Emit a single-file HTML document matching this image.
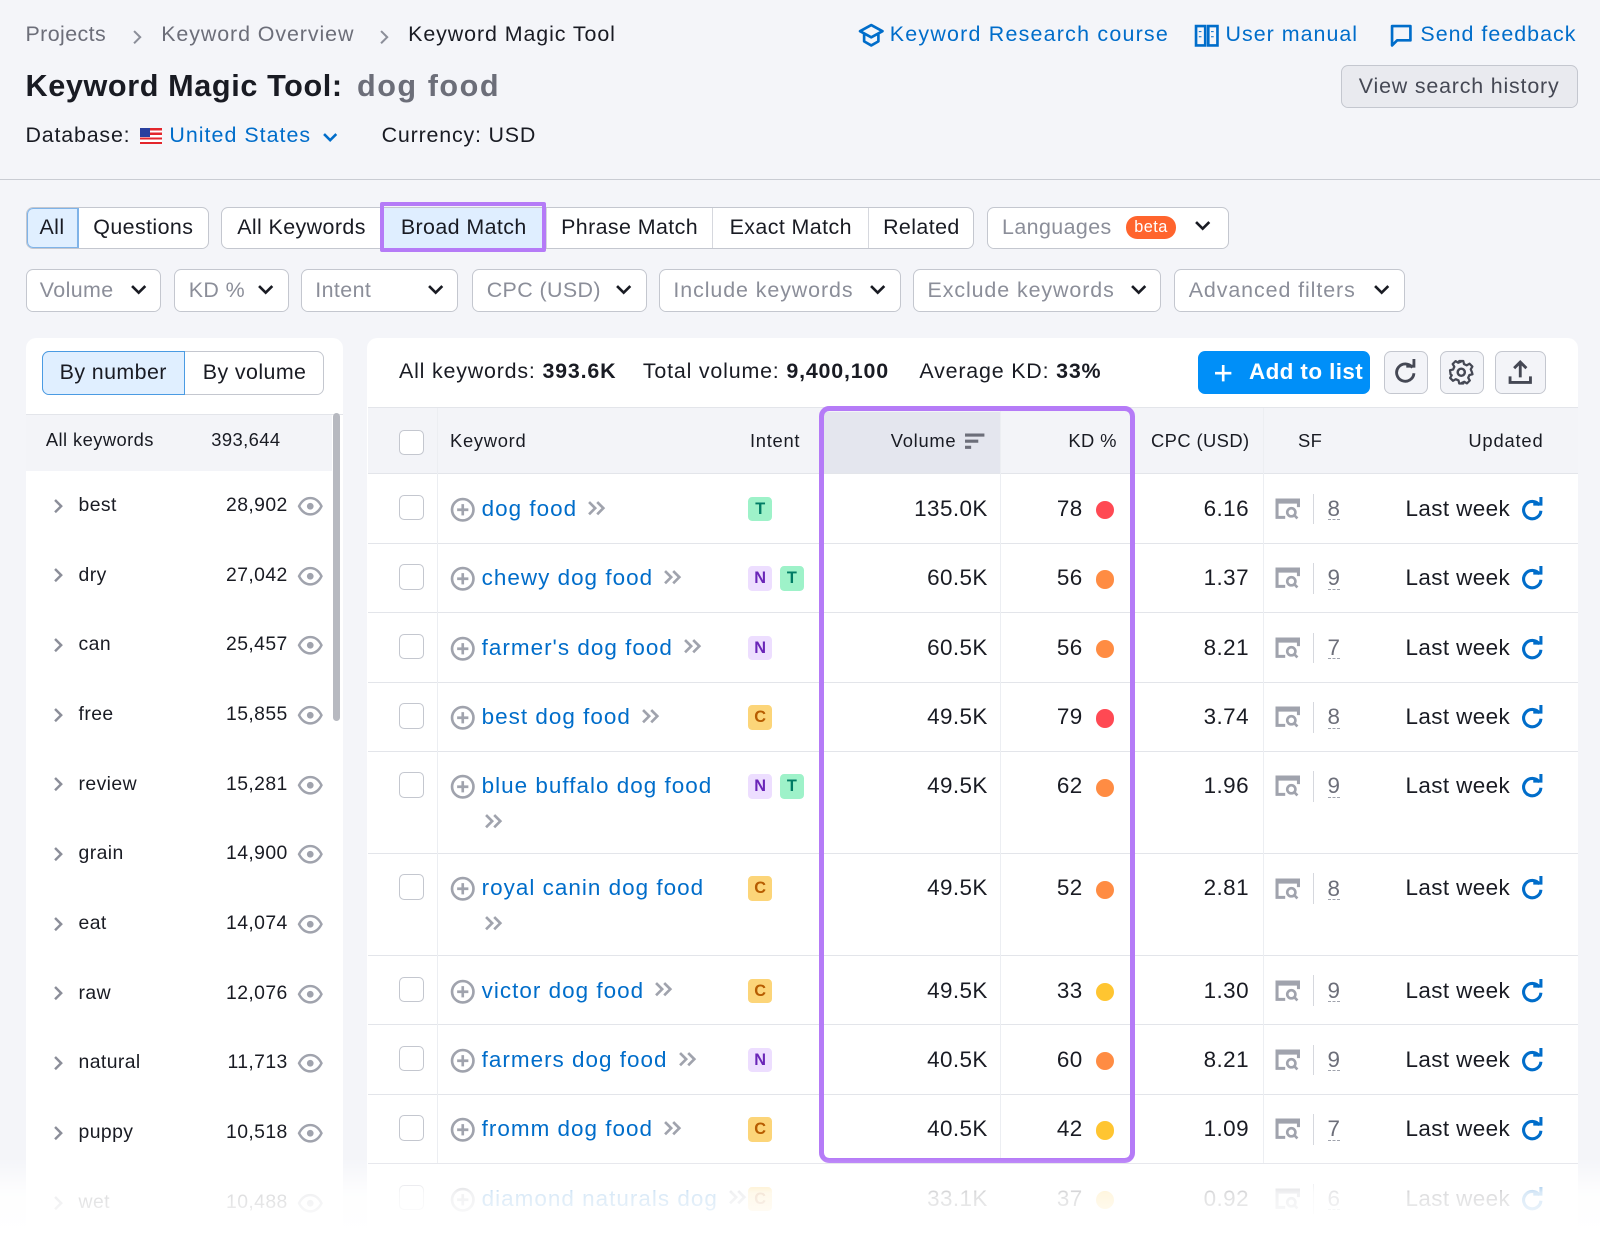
<!DOCTYPE html>
<html><head><meta charset="utf-8">
<style>
*{box-sizing:border-box;margin:0;padding:0}
html,body{width:1600px;height:1234px;overflow:hidden;background:#f4f5f9}
body{font-family:"Liberation Sans",Arial,sans-serif;color:#191b23;letter-spacing:0.4px}
#w{position:relative;width:1568px;height:1210px;zoom:1.0204;background:#f4f5f9}
.a{position:absolute;white-space:nowrap}
.blue{color:#006dca}
.btn{position:absolute;border:1px solid #c4c7cf;background:#fff;border-radius:7px;height:42px;font-size:21px;color:#8b8e99;line-height:40px;padding-left:13px}
.btn svg{position:absolute;right:13px;top:13px}
.seg{position:absolute;top:203px;height:41px;border:1px solid #c4c7cf;background:#fff;border-radius:7px;font-size:21px;line-height:39px}
.seg div{position:absolute;top:0;height:39px;text-align:center;border-right:1px solid #d6d8de}
.seg div:last-child{border-right:none}
.panel{position:absolute;background:#fff;border-radius:10px}
.lr{position:absolute;left:25px;width:300px;height:68px;font-size:19px}
.lr .n{position:absolute;right:43px;top:22px}
.lr .k{position:absolute;left:52px;top:22px}
.lr .c{position:absolute;left:27px;top:25px}
.lr .e{position:absolute;right:8px;top:24px}
.row{position:absolute;left:361px;width:1185px;border-top:1px solid #e3e5ea;background:#fff;font-size:22px}
.row>*{position:absolute}
.cb{left:30px;width:25px;height:25px;border:1.5px solid #c4c7cf;border-radius:5px;background:#fff}
.kw{left:111px;color:#006dca;letter-spacing:1px}
.pl{left:80px}
.badge{width:24px;height:24px;border-radius:4px;font-size:16px;font-weight:bold;text-align:center;line-height:24px;letter-spacing:0}
.T{background:#9ef2c9;color:#007c65}.N{background:#eddeff;color:#6a25b8}.C{background:#fcd579;color:#b75c00}
.vol{right:578px}.kd{right:485px}
.dot{width:18px;height:18px;border-radius:50%;left:713px}
.cpc{right:322px}
.sf{left:889px}
.div{left:926px;width:1px;height:30px;background:#d6d8de}
.sfn{left:940px;color:#6c6e79;border-bottom:1.5px dashed #a0a3ad;line-height:20px}
.lw{right:66px}
.rf{right:32px}
.vl{position:absolute;top:400px;width:1px;height:740px;background:#eceef2}
</style></head><body><div id="w">

<!-- breadcrumb -->
<div class="a" style="left:25px;top:22px;font-size:21px;color:#6c6e79">Projects</div>
<svg class="a" style="left:128px;top:28px" width="12" height="16"><path d="M3 2l6 6-6 6" stroke="#8b8e99" stroke-width="2" fill="none"/></svg>
<div class="a" style="left:158px;top:22px;font-size:21px;color:#6c6e79;letter-spacing:0.9px">Keyword Overview</div>
<svg class="a" style="left:370px;top:28px" width="12" height="16"><path d="M3 2l6 6-6 6" stroke="#8b8e99" stroke-width="2" fill="none"/></svg>
<div class="a" style="left:400px;top:22px;font-size:21px;color:#191b23;letter-spacing:0.9px">Keyword Magic Tool</div>

<svg class="a" style="left:841px;top:22px" width="26" height="26" viewBox="0 0 26 26"><path d="M2 9l11-6 11 6-11 6z M6 12v7l7 4 7-4v-7" stroke="#006dca" stroke-width="2.6" fill="none" stroke-linejoin="round"/></svg>
<div class="a blue" style="left:872px;top:22px;font-size:21px;letter-spacing:1.2px">Keyword Research course</div>
<svg class="a" style="left:1170px;top:23px" width="25" height="26" viewBox="0 0 25 26"><path d="M2 3h9v19H2z M14 3h9v19h-9z" stroke="#006dca" stroke-width="2.6" fill="none"/><path d="M6 8v1M6 13v1M18 8v1M18 13v1" stroke="#006dca" stroke-width="2.6"/></svg>
<div class="a blue" style="left:1201px;top:22px;font-size:21px;letter-spacing:1px">User manual</div>
<svg class="a" style="left:1361px;top:23px" width="24" height="26" viewBox="0 0 24 26"><path d="M3 3h18v14H8l-5 5z" stroke="#006dca" stroke-width="2.6" fill="none" stroke-linejoin="round"/></svg>
<div class="a blue" style="left:1392px;top:22px;font-size:21px;letter-spacing:1px">Send feedback</div>

<div class="a" style="left:25px;top:68px;font-size:30px;font-weight:bold;letter-spacing:0.6px">Keyword Magic Tool:<span style="color:#6c6e79;margin-left:14px;letter-spacing:1.5px">dog food</span></div>
<div class="a" style="left:1314px;top:64px;width:232px;height:42px;background:#e9eaef;border:1px solid #c4c7cf;border-radius:7px;font-size:21px;color:#454854;text-align:center;line-height:40px;letter-spacing:0.8px">View search history</div>

<div class="a" style="left:25px;top:121px;font-size:21px;letter-spacing:0.8px">Database:</div>
<div class="a" style="left:137px;top:125px;width:22px;height:16px;background:repeating-linear-gradient(#e3262c 0 2.3px,#fff 2.3px 4.6px)"><div style="width:10px;height:9px;background:#2a3f9e"></div></div>
<div class="a blue" style="left:166px;top:121px;font-size:21px;letter-spacing:1px">United States</div>
<svg class="a" style="left:316px;top:128px" width="16" height="12"><path d="M2 3l6 6 6-6" stroke="#006dca" stroke-width="2.5" fill="none"/></svg>
<div class="a" style="left:374px;top:121px;font-size:21px;letter-spacing:0.8px">Currency: USD</div>

<div class="a" style="left:0;top:175px;width:1568px;height:1.5px;background:#c9ccd3"></div>

<!-- tabs -->
<div class="seg" style="left:25px;width:180px"><div style="left:0;width:51px;background:#e0efff;border-radius:6px 0 0 6px;box-shadow:inset 0 0 0 1px #7fb3e8;border-right:1px solid #7fb3e8">All</div><div style="left:51px;width:127px">Questions</div></div>
<div class="seg" style="left:217px;width:738px"><div style="left:0;width:156px">All Keywords</div><div style="left:156px;width:162px;background:#dfeeff">Broad Match</div><div style="left:318px;width:163px">Phrase Match</div><div style="left:481px;width:153px">Exact Match</div><div style="left:634px;width:102px">Related</div></div>
<div class="a" style="left:372px;top:198px;width:163px;height:49px;border:4px solid #b57bf7;border-radius:2px"></div>
<div class="seg" style="left:967px;width:237px;color:#8b8e99"><div style="left:14px;text-align:left;border:none">Languages <span style="display:inline-block;background:#ff642d;color:#fff;font-size:16px;line-height:22px;padding:0 8px;border-radius:11px;margin-left:8px;vertical-align:2px">beta</span></div></div>
<svg class="a" style="left:1170px;top:216px" width="17" height="12"><path d="M2 2l6.5 6.5L15 2" stroke="#191b23" stroke-width="2.6" fill="none"/></svg>

<!-- filters -->
<div class="btn" style="left:25px;top:264px;width:133px">Volume<svg width="17" height="12"><path d="M2 2l6.5 6.5L15 2" stroke="#191b23" stroke-width="2.6" fill="none"/></svg></div>
<div class="btn" style="left:171px;top:264px;width:112px">KD %<svg width="17" height="12"><path d="M2 2l6.5 6.5L15 2" stroke="#191b23" stroke-width="2.6" fill="none"/></svg></div>
<div class="btn" style="left:295px;top:264px;width:154px">Intent<svg width="17" height="12"><path d="M2 2l6.5 6.5L15 2" stroke="#191b23" stroke-width="2.6" fill="none"/></svg></div>
<div class="btn" style="left:463px;top:264px;width:171px">CPC (USD)<svg width="17" height="12"><path d="M2 2l6.5 6.5L15 2" stroke="#191b23" stroke-width="2.6" fill="none"/></svg></div>
<div class="btn" style="left:646px;top:264px;width:237px;letter-spacing:0.9px">Include keywords<svg width="17" height="12"><path d="M2 2l6.5 6.5L15 2" stroke="#191b23" stroke-width="2.6" fill="none"/></svg></div>
<div class="btn" style="left:895px;top:264px;width:243px;letter-spacing:0.9px">Exclude keywords<svg width="17" height="12"><path d="M2 2l6.5 6.5L15 2" stroke="#191b23" stroke-width="2.6" fill="none"/></svg></div>
<div class="btn" style="left:1151px;top:264px;width:226px;letter-spacing:0.9px">Advanced filters<svg width="17" height="12"><path d="M2 2l6.5 6.5L15 2" stroke="#191b23" stroke-width="2.6" fill="none"/></svg></div>

<!-- left panel -->
<div class="panel" style="left:25px;top:331px;width:311px;height:900px"></div>
<div class="a" style="left:41px;top:344px;width:277px;height:43px;border:1px solid #c4c7cf;border-radius:7px;background:#fff"></div>
<div class="a" style="left:41px;top:344px;width:140px;height:43px;border:1px solid #4a9be3;border-radius:7px 0 0 7px;background:#e0efff;font-size:21px;line-height:41px;text-align:center">By number</div>
<div class="a" style="left:181px;top:344px;width:137px;font-size:21px;line-height:43px;text-align:center">By volume</div>
<div class="a" style="left:25px;top:406px;width:311px;height:1px;background:#e3e5ea"></div>
<div class="a" style="left:25px;top:407px;width:300px;height:55px;background:#f3f4f8"></div>
<div class="a" style="left:45px;top:420px;font-size:18px">All keywords</div>
<div class="a" style="left:207px;top:420px;font-size:18px">393,644</div>
<div class="a" style="left:326px;top:405px;width:7px;height:302px;background:#b7b9c0;border-radius:4px"></div>

<div id="lrows"></div>

<!-- main panel -->
<div class="panel" style="left:360px;top:331px;width:1186px;height:900px"></div>
<div class="a" style="left:391px;top:352px;font-size:21px;letter-spacing:0.8px">All keywords: <b>393.6K</b></div>
<div class="a" style="left:630px;top:352px;font-size:21px;letter-spacing:0.8px">Total volume: <b>9,400,100</b></div>
<div class="a" style="left:901px;top:352px;font-size:21px;letter-spacing:0.8px">Average KD: <b>33%</b></div>
<div class="a" style="left:1174px;top:344px;width:169px;height:42px;background:#008ff8;border-radius:7px;color:#fff;font-size:22px;font-weight:bold;line-height:42px;padding-left:50px">Add to list</div>
<svg class="a" style="left:1189px;top:356px" width="20" height="20"><path d="M10 2v16M2 10h16" stroke="#fff" stroke-width="2.6"/></svg>
<div class="a" style="left:1356px;top:344px;width:43px;height:42px;background:#f3f4f8;border:1px solid #c4c7cf;border-radius:7px"></div>
<svg class="a" style="left:1364px;top:352px" width="26" height="26" viewBox="0 0 26 26"><path d="M20 8.5A8.5 8.5 0 1 0 21.5 14" stroke="#454854" stroke-width="2.8" fill="none"/><path d="M14 7h7.5V0" stroke="#454854" stroke-width="2.8" fill="none"/></svg>
<div class="a" style="left:1411px;top:344px;width:43px;height:42px;background:#f3f4f8;border:1px solid #c4c7cf;border-radius:7px"></div>
<svg class="a" style="left:1419px;top:352px" width="26" height="26" viewBox="0 0 26 26"><circle cx="13" cy="13" r="3.5" stroke="#454854" stroke-width="2.4" fill="none"/><path d="M11 2h4l.7 3 2.7 1.2 2.7-1.6 2.8 2.8-1.6 2.7L23.5 13l.5 2-3 .7-1.2 2.7 1.6 2.7-2.8 2.8-2.7-1.6-2.7 1.2L15 24h-4l-.7-3-2.7-1.2-2.7 1.6-2.8-2.8 1.6-2.7L2.5 15 2 11l3-.7 1.2-2.7-1.6-2.7 2.8-2.8 2.7 1.6 2.7-1.2z" stroke="#454854" stroke-width="2.2" fill="none" stroke-linejoin="round"/></svg>
<div class="a" style="left:1465px;top:344px;width:50px;height:42px;background:#f3f4f8;border:1px solid #c4c7cf;border-radius:7px"></div>
<svg class="a" style="left:1477px;top:352px" width="26" height="26" viewBox="0 0 26 26"><path d="M13 18V3M7 9l6-6 6 6M3 17v6h20v-6" stroke="#454854" stroke-width="2.8" fill="none"/></svg>

<!-- header -->
<div class="a" style="left:361px;top:399px;width:1185px;height:66px;background:#f3f4f8;border-top:1px solid #e3e5ea;border-bottom:1px solid #e3e5ea"></div>
<div class="a" style="left:808px;top:404px;width:172px;height:60px;background:#e4e6ee"></div>
<div class="a" style="left:391px;top:421px;width:25px;height:25px;border:1.5px solid #c4c7cf;border-radius:5px;background:#fff"></div>
<div class="a" style="left:441px;top:421px;font-size:18px;letter-spacing:0.7px">Keyword</div>
<div class="a" style="left:735px;top:421px;font-size:18px;letter-spacing:0.7px">Intent</div>
<div class="a" style="left:873px;top:421px;font-size:18px;letter-spacing:0.7px">Volume</div>
<svg class="a" style="left:945px;top:423px" width="22" height="18"><path d="M1 3h19M1 9h13M1 15h6" stroke="#6c6e79" stroke-width="3"/></svg>
<div class="a" style="left:1047px;top:421px;font-size:18px">KD %</div>
<div class="a" style="left:1128px;top:421px;font-size:18px">CPC (USD)</div>
<div class="a" style="left:1272px;top:421px;font-size:18px">SF</div>
<div class="a" style="left:1439px;top:421px;font-size:18px;letter-spacing:0.8px">Updated</div>

<div id="rows"></div>
<div class="vl" style="left:428px"></div><div class="vl" style="left:980px"></div><div class="vl" style="left:1238px"></div>

<div class="a" style="left:803px;top:398px;width:309px;height:742px;border:5px solid #b57bf7;border-radius:10px"></div>

<div class="a" style="left:0;top:1135px;width:1568px;height:75px;background:linear-gradient(rgba(255,255,255,0),rgba(255,255,255,.85) 45%,#fff)"></div>

<script>
var L=[["best","28,902"],["dry","27,042"],["can","25,457"],["free","15,855"],["review","15,281"],["grain","14,900"],["eat","14,074"],["raw","12,076"],["natural","11,713"],["puppy","10,518"],["wet","10,488"]];
var eye='<svg width="26" height="20" viewBox="0 0 26 20"><path d="M2 10C5 4 9 2 13 2s8 2 11 8c-3 6-7 8-11 8S5 16 2 10z" stroke="#a0a3ad" stroke-width="2.4" fill="none"/><circle cx="13" cy="10" r="3.3" fill="#a0a3ad"/></svg>';
var chev='<svg width="10" height="16"><path d="M2 2l6 6-6 6" stroke="#8b8e99" stroke-width="2.4" fill="none"/></svg>';
var h='';
L.forEach(function(r,i){h+='<div class="lr" style="top:'+(462+i*68.3)+'px"><span class="c">'+chev+'</span><span class="k">'+r[0]+'</span><span class="n">'+r[1]+'</span><span class="e">'+eye+'</span></div>';});
document.getElementById('lrows').innerHTML=h;
var R=[["dog food","T","135.0K",78,"r","6.16",8,0],["chewy dog food","NT","60.5K",56,"o","1.37",9,0],["farmer's dog food","N","60.5K",56,"o","8.21",7,0],["best dog food","C","49.5K",79,"r","3.74",8,0],["blue buffalo dog food","NT","49.5K",62,"o","1.96",9,1],["royal canin dog food","C","49.5K",52,"o","2.81",8,1],["victor dog food","C","49.5K",33,"y","1.30",9,0],["farmers dog food","N","40.5K",60,"o","8.21",9,0],["fromm dog food","C","40.5K",42,"y","1.09",7,0],["diamond naturals dog","C","33.1K",37,"y","0.92",6,0]];
var col={r:"#ff4953",o:"#ff8c43",y:"#ffc531"};
var plus='<svg width="25" height="25" viewBox="0 0 25 25"><circle cx="12.5" cy="12.5" r="10.5" stroke="#a0a3ad" stroke-width="2.6" fill="none"/><path d="M12.5 7v11M7 12.5h11" stroke="#a0a3ad" stroke-width="2.6"/></svg>';
var dch='<svg width="20" height="16" viewBox="0 0 20 16"><path d="M2 2l6 6-6 6M10 2l6 6-6 6" stroke="#a0a3ad" stroke-width="2.6" fill="none"/></svg>';
var sf='<svg width="25" height="22" viewBox="0 0 25 22"><path d="M10 19H2V2h21v7" stroke="#a0a3ad" stroke-width="3" fill="none"/><path d="M2 4h21" stroke="#a0a3ad" stroke-width="3"/><circle cx="16" cy="14" r="4" stroke="#a0a3ad" stroke-width="2.6" fill="none"/><path d="M19 17l3 3" stroke="#a0a3ad" stroke-width="2.6"/></svg>';
var rf='<svg width="24" height="24" viewBox="0 0 24 24"><path d="M19 8A8.5 8.5 0 1 0 20.5 13.5" stroke="#006dca" stroke-width="3" fill="none"/><path d="M13 7h7.5V0" stroke="#006dca" stroke-width="3" fill="none"/></svg>';
var y=464,h2='';
R.forEach(function(r){var ht=r[7]?100:68;var ty=20;
var b='';for(var j=0;j<r[1].length;j++)b+='<span class="badge '+r[1][j]+'" style="left:'+(372+j*31)+'px;top:'+(ty+2)+'px">'+r[1][j]+'</span>';
var kwc=r[7]?'':'<span style="margin-left:10px;vertical-align:0">'+dch+'</span>';
h2+='<div class="row" style="top:'+y+'px;height:'+ht+'px"><span class="cb" style="top:'+(ty)+'px"></span><span class="pl" style="top:'+(ty+2)+'px">'+plus+'</span><span class="kw" style="top:'+(ty+1)+'px">'+r[0]+kwc+'</span>'+(r[7]?'<span style="left:113px;top:'+(ty+36)+'px">'+dch+'</span>':'')+b+'<span class="vol" style="top:'+(ty+1)+'px">'+r[2]+'</span><span class="kd" style="top:'+(ty+1)+'px">'+r[3]+'</span><span class="dot" style="top:'+(ty+6)+'px;background:'+col[r[4]]+'"></span><span class="cpc" style="top:'+(ty+1)+'px">'+r[5]+'</span><span class="sf" style="top:'+(ty+3)+'px">'+sf+'</span><span class="div" style="top:'+(ty-1)+'px"></span><span class="sfn" style="top:'+(ty+4)+'px">'+r[6]+'</span><span class="lw" style="top:'+(ty+1)+'px">Last week</span><span class="rf" style="top:'+(ty+2)+'px">'+rf+'</span></div>';
y+=ht;});
document.getElementById('rows').innerHTML=h2;
</script>
</div></body></html>
